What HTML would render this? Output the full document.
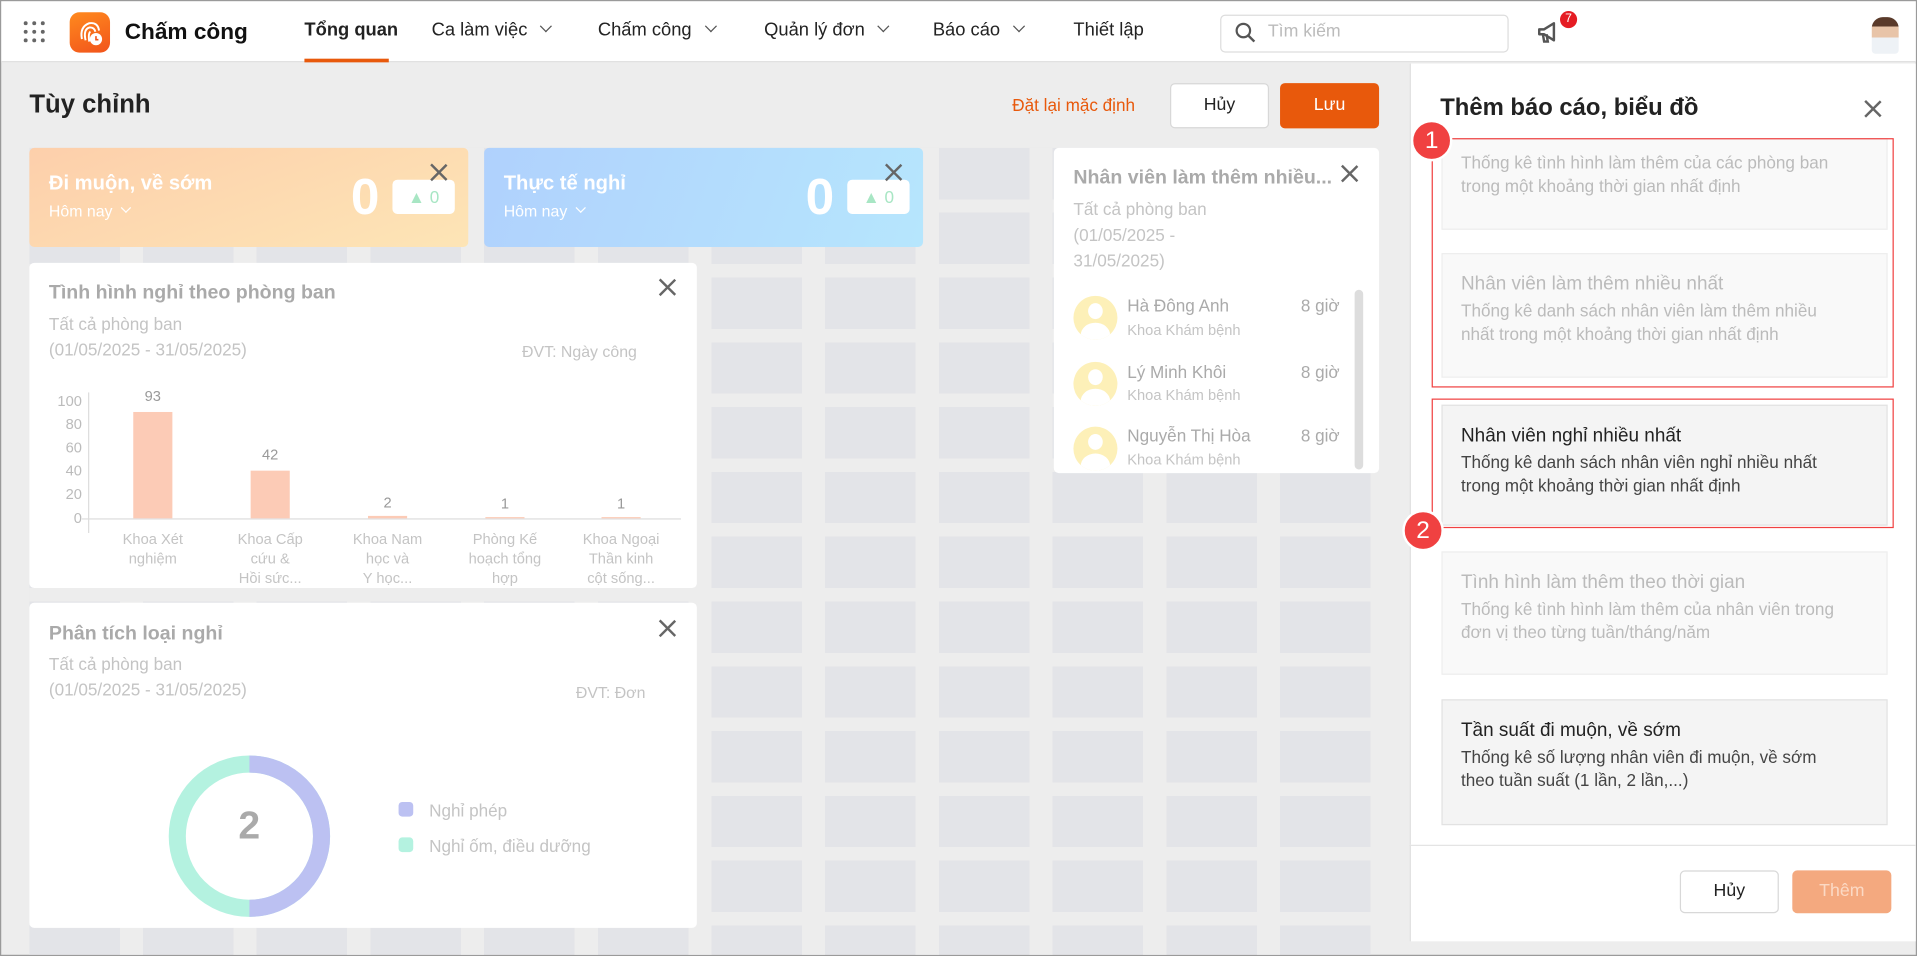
<!DOCTYPE html>
<html><head><meta charset="utf-8">
<style>
*{box-sizing:border-box;margin:0;padding:0}
html,body{width:1917px;height:956px;overflow:hidden;background:#fff}
body{font-family:"Liberation Sans","Noto Sans CJK SC",sans-serif;color:#222}
#w{position:absolute;left:0;top:0;width:1568px;height:782px;transform:scale(1.22258,1.2225);transform-origin:0 0;border:1px solid #9a9a9a;background:#ededed;overflow:hidden}
.a{position:absolute}
.nav{left:0;top:0;width:1568px;height:50px;background:#fff;border-bottom:1px solid #ddd}
.ni{position:absolute;top:15px;font-size:15px;color:#222}
.chev{display:inline-block;width:7px;height:7px;border-right:1.6px solid #555;border-bottom:1.6px solid #555;transform:rotate(45deg);margin-left:12px;position:relative;top:-4px}
.grid{left:23px;top:120px;width:1097px;height:662px;background:repeating-linear-gradient(90deg,transparent 0 74px,#ededed 74px 93px),repeating-linear-gradient(180deg,transparent 0 42px,#ededed 42px 53px),#e3e4e8}
.card{background:#fff;border-radius:4px}
.x{position:absolute;width:14px;height:14px}
.x:before,.x:after{content:"";position:absolute;left:6px;top:-2px;width:1.6px;height:18px;background:#666;transform:rotate(45deg)}
.x:after{transform:rotate(-45deg)}
.gt{font-size:16px;font-weight:bold;color:#aaa}
.gs{font-size:14px;color:#c4c4c4;line-height:21px}
.item{position:absolute;left:1178px;width:365px;border:1px solid #e2e2e2;background:#f4f4f4;padding:16px 15px}
.item .t{font-size:15.5px;color:#222;margin-bottom:3px}
.item .d{font-size:14px;color:#444;line-height:19px}
.item.dis{background:#f9f9f9;border-color:#eee}
.item.dis .t,.item.dis .d{color:#bbb}
.badge{position:absolute;width:30px;height:30px;border-radius:50%;background:#f04141;color:#fff;font-size:20px;text-align:center;line-height:30px;border:2px solid #fff;box-sizing:content-box;margin:-2px}
.yl{position:absolute;left:36px;width:30px;text-align:right;font-size:12px;color:#bbb}
.bar{position:absolute;width:32px;background:#fccbb6}
.bv{position:absolute;width:32px;text-align:center;font-size:12px;color:#999}
.bl{position:absolute;width:90px;text-align:center;font-size:12px;color:#c4c4c4;line-height:16px;top:432px}
.av{position:absolute;left:877px;width:36px;height:36px;border-radius:50%;background:#fdf0b8;overflow:hidden}
.av:before{content:"";position:absolute;left:12px;top:6px;width:12px;height:13px;border-radius:50%;background:#fff}
.av:after{content:"";position:absolute;left:6px;top:22px;width:24px;height:20px;border-radius:50%;background:#fff}
.nm{position:absolute;left:921px;font-size:14px;color:#aaa}
.dp{position:absolute;left:921px;font-size:12px;color:#c4c4c4}
.hr{position:absolute;left:1063px;font-size:14px;color:#aaa}
</style></head><body><div id="w">
<div class="a grid"></div>

<div class="a nav">
 <svg class="a" style="left:18px;top:16px" width="18" height="18"><g fill="#666"><circle cx="2" cy="2" r="1.6"/><circle cx="9" cy="2" r="1.6"/><circle cx="16" cy="2" r="1.6"/><circle cx="2" cy="9" r="1.6"/><circle cx="9" cy="9" r="1.6"/><circle cx="16" cy="9" r="1.6"/><circle cx="2" cy="16" r="1.6"/><circle cx="9" cy="16" r="1.6"/><circle cx="16" cy="16" r="1.6"/></g></svg>
 <div class="a" style="left:56px;top:9px;width:33px;height:33px;border-radius:8px;background:linear-gradient(160deg,#ff8a1e,#f2541b)"></div>
 <svg class="a" style="left:56px;top:9px" width="33" height="33"><g fill="none" stroke="#fff" stroke-width="1.6"><path d="M10 22 Q8 12 16 9 Q23 8 24 15"/><path d="M13 23 Q11 14 16 12.5 Q20 12 21 16"/><path d="M16 24 Q15 17 17 16"/></g><circle cx="21.5" cy="22" r="5" fill="#fff"/><path d="M21.5 19.5v3h2" stroke="#f2541b" stroke-width="1.3" fill="none"/></svg>
 <div class="a" style="left:101px;top:14px;font-size:18.5px;font-weight:bold;color:#111">Chấm công</div>
 <div class="ni" style="left:248px;font-weight:bold">Tổng quan</div>
 <div class="a" style="left:248px;top:47px;width:69px;height:3px;background:#e8590c"></div>
 <div class="ni" style="left:352px">Ca làm việc<span class="chev"></span></div>
 <div class="ni" style="left:488px">Chấm công<span class="chev"></span></div>
 <div class="ni" style="left:624px">Quản lý đơn<span class="chev"></span></div>
 <div class="ni" style="left:762px">Báo cáo<span class="chev"></span></div>
 <div class="ni" style="left:877px">Thiết lập</div>
 <div class="a" style="left:997px;top:11px;width:236px;height:31px;border:1px solid #ddd;border-radius:4px"></div>
 <svg class="a" style="left:1009px;top:17px" width="18" height="18"><circle cx="7" cy="7" r="5.5" fill="none" stroke="#555" stroke-width="1.8"/><path d="M11 11l5 5" stroke="#555" stroke-width="2"/></svg>
 <div class="a" style="left:1036px;top:17px;font-size:14.5px;color:#bbb">Tìm kiếm</div>
 <svg class="a" style="left:1255px;top:15px" width="22" height="22"><path d="M3 8h4l8-5v14l-8-5H3z" fill="none" stroke="#555" stroke-width="2" stroke-linejoin="round"/><path d="M6 12l1 6h3l-1-6" fill="none" stroke="#555" stroke-width="2"/></svg>
 <div class="a" style="left:1275px;top:8px;width:14px;height:14px;border-radius:50%;background:#e51c23;color:#fff;font-size:10px;text-align:center;line-height:14px">7</div>
 <div class="a" style="left:1530px;top:13px;width:22px;height:30px;border-radius:9px 9px 3px 3px;background:linear-gradient(#5a3a2a 0 25%,#e8c4a8 25% 55%,#eef2f6 55%)"></div>
</div>

<div class="a" style="left:23px;top:73px;font-size:21px;font-weight:bold;color:#222">Tùy chỉnh</div>
<div class="a" style="left:827px;top:77px;font-size:14px;color:#e8590c">Đặt lại mặc định</div>
<div class="a" style="left:956px;top:67px;width:81px;height:37px;background:#fff;border:1px solid #d8d8d8;border-radius:4px;text-align:center;line-height:35px;font-size:14.5px">Hủy</div>
<div class="a" style="left:1046px;top:67px;width:81px;height:37px;background:#e8590c;border-radius:4px;text-align:center;line-height:37px;font-size:14.5px;color:#fff">Lưu</div>

<div class="a" style="left:23px;top:120px;width:359px;height:81px;border-radius:4px;background:linear-gradient(160deg,#fdcfab,#fde5b6)"></div>
<div class="a" style="left:39px;top:140px;font-size:16.5px;color:#fff;font-weight:bold">Đi muộn, về sớm</div>
<div class="a" style="left:39px;top:164px;font-size:13px;color:#fff">Hôm nay<span class="chev" style="border-color:#fff;margin-left:8px;width:6px;height:6px"></span></div>
<div class="a" style="left:286px;top:136px;font-size:42px;font-weight:bold;color:#fff">0</div>
<div class="a" style="left:320px;top:146px;width:51px;height:28px;background:#fff;border-radius:4px;font-size:14px;color:#a8e6c4;text-align:center;line-height:28px">▲ 0</div>
<div class="x" style="left:351px;top:133px"></div>
<div class="a" style="left:395px;top:120px;width:359px;height:81px;border-radius:4px;background:linear-gradient(110deg,#b0d1fd,#b6e6fd)"></div>
<div class="a" style="left:411px;top:140px;font-size:16.5px;color:#fff;font-weight:bold">Thực tế nghỉ</div>
<div class="a" style="left:411px;top:164px;font-size:13px;color:#fff">Hôm nay<span class="chev" style="border-color:#fff;margin-left:8px;width:6px;height:6px"></span></div>
<div class="a" style="left:658px;top:136px;font-size:42px;font-weight:bold;color:#fff">0</div>
<div class="a" style="left:692px;top:146px;width:51px;height:28px;background:#fff;border-radius:4px;font-size:14px;color:#a8e6c4;text-align:center;line-height:28px">▲ 0</div>
<div class="x" style="left:723px;top:133px"></div>

<div class="a card" style="left:861px;top:120px;width:266px;height:266px"></div>
<div class="a gt" style="left:877px;top:136px">Nhân viên làm thêm nhiều...</div>
<div class="x" style="left:1096px;top:134px"></div>
<div class="a gs" style="left:877px;top:160px">Tất cả phòng ban<br>(01/05/2025 -<br>31/05/2025)</div>
<div class="av" style="top:241px"></div><div class="nm" style="top:241px">Hà Đông Anh</div><div class="dp" style="top:262px">Khoa Khám bệnh</div><div class="hr" style="top:241px">8 giờ</div>
<div class="av" style="top:295px"></div><div class="nm" style="top:295px">Lý Minh Khôi</div><div class="dp" style="top:315px">Khoa Khám bệnh</div><div class="hr" style="top:295px">8 giờ</div>
<div class="av" style="top:348px"></div><div class="nm" style="top:347px">Nguyễn Thị Hòa</div><div class="dp" style="top:368px">Khoa Khám bệnh</div><div class="hr" style="top:347px">8 giờ</div>
<div class="a" style="left:1107px;top:236px;width:7px;height:147px;border-radius:4px;background:#ddd"></div>

<div class="a card" style="left:23px;top:214px;width:546px;height:266px"></div>
<div class="a gt" style="left:39px;top:230px">Tình hình nghỉ theo phòng ban</div>
<div class="x" style="left:538px;top:227px"></div>
<div class="a gs" style="left:39px;top:254px">Tất cả phòng ban<br>(01/05/2025 - 31/05/2025)</div>
<div class="a gs" style="left:426px;top:276px;font-size:13px">ĐVT: Ngày công</div>
<div class="yl" style="top:320px">100</div><div class="yl" style="top:339px">80</div><div class="yl" style="top:358px">60</div><div class="yl" style="top:377px">40</div><div class="yl" style="top:396px">20</div><div class="yl" style="top:416px">0</div>
<div class="a" style="left:71px;top:320px;width:1px;height:115px;background:#ddd"></div>
<div class="a" style="left:66px;top:423px;width:490px;height:1px;background:#ddd"></div>
<div class="bar" style="left:108px;top:336px;height:87px"></div><div class="bv" style="left:108px;top:316px">93</div>
<div class="bar" style="left:204px;top:384px;height:39px"></div><div class="bv" style="left:204px;top:364px">42</div>
<div class="bar" style="left:300px;top:421px;height:2px"></div><div class="bv" style="left:300px;top:403px">2</div>
<div class="bar" style="left:396px;top:422px;height:1px"></div><div class="bv" style="left:396px;top:404px">1</div>
<div class="bar" style="left:491px;top:422px;height:1px"></div><div class="bv" style="left:491px;top:404px">1</div>
<div class="bl" style="left:79px">Khoa Xét<br>nghiệm</div>
<div class="bl" style="left:175px">Khoa Cấp<br>cứu &amp;<br>Hồi sức...</div>
<div class="bl" style="left:271px">Khoa Nam<br>học và<br>Y học...</div>
<div class="bl" style="left:367px">Phòng Kế<br>hoạch tổng<br>hợp</div>
<div class="bl" style="left:462px">Khoa Ngoại<br>Thần kinh<br>cột sống...</div>

<div class="a card" style="left:23px;top:492px;width:546px;height:266px"></div>
<div class="a gt" style="left:39px;top:509px">Phân tích loại nghỉ</div>
<div class="x" style="left:538px;top:506px"></div>
<div class="a gs" style="left:39px;top:532px">Tất cả phòng ban<br>(01/05/2025 - 31/05/2025)</div>
<div class="a gs" style="left:470px;top:555px;font-size:13px">ĐVT: Đơn</div>
<svg class="a" style="left:136px;top:616px" width="134" height="134"><circle cx="67" cy="67" r="59" fill="none" stroke="#b4f2e0" stroke-width="14"/><path d="M67 8A59 59 0 0 1 67 126" fill="none" stroke="#bcc1f2" stroke-width="14"/></svg>
<div class="a" style="left:194px;top:656px;font-size:32px;font-weight:bold;color:#aaa">2</div>
<div class="a" style="left:325px;top:655px;width:12px;height:12px;border-radius:3px;background:#bcc1f2"></div>
<div class="a gs" style="left:350px;top:652px">Nghỉ phép</div>
<div class="a" style="left:325px;top:684px;width:12px;height:12px;border-radius:3px;background:#b4f2e0"></div>
<div class="a gs" style="left:350px;top:681px">Nghỉ ốm, điều dưỡng</div>

<div class="a" style="left:1152px;top:51px;width:416px;height:640px;background:#fff;border-left:1px solid #ddd"></div>
<div class="a" style="left:1152px;top:690px;width:416px;height:79px;background:#fff;border-top:1px solid #e4e4e4;border-left:1px solid #ddd"></div>
<div class="a" style="left:1177px;top:76px;font-size:19.5px;font-weight:bold;color:#222">Thêm báo cáo, biểu đồ</div>
<div class="x" style="left:1524px;top:81px"></div>

<div class="item dis" style="top:112px;height:75px;padding-top:10px"><div class="d">Thống kê tình hình làm thêm của các phòng ban<br>trong một khoảng thời gian nhất định</div></div>
<div class="item dis" style="top:206px;height:102px"><div class="t">Nhân viên làm thêm nhiều nhất</div><div class="d">Thống kê danh sách nhân viên làm thêm nhiều<br>nhất trong một khoảng thời gian nhất định</div></div>
<div class="a" style="left:1170px;top:112px;width:378px;height:204px;border:1.5px solid #f04141"></div>
<div class="item" style="top:330px;height:99px"><div class="t">Nhân viên nghỉ nhiều nhất</div><div class="d">Thống kê danh sách nhân viên nghỉ nhiều nhất<br>trong một khoảng thời gian nhất định</div></div>
<div class="a" style="left:1170px;top:325px;width:378px;height:106px;border:1.5px solid #f04141"></div>
<div class="item dis" style="top:450px;height:101px"><div class="t">Tình hình làm thêm theo thời gian</div><div class="d">Thống kê tình hình làm thêm của nhân viên trong<br>đơn vị theo từng tuần/tháng/năm</div></div>
<div class="item" style="top:571px;height:103px"><div class="t">Tần suất đi muộn, về sớm</div><div class="d">Thống kê số lượng nhân viên đi muộn, về sớm<br>theo tuần suất (1 lần, 2 lần,...)</div></div>
<div class="badge" style="left:1155px;top:99px">1</div>
<div class="badge" style="left:1148px;top:418px">2</div>

<div class="a" style="left:1373px;top:711px;width:81px;height:35px;border:1px solid #d8d8d8;border-radius:4px;text-align:center;line-height:33px;font-size:14.5px;background:#fff">Hủy</div>
<div class="a" style="left:1465px;top:711px;width:81px;height:35px;border-radius:4px;text-align:center;line-height:35px;font-size:14.5px;background:#f4a97f;color:#fbd9c4">Thêm</div>
</div></body></html>
